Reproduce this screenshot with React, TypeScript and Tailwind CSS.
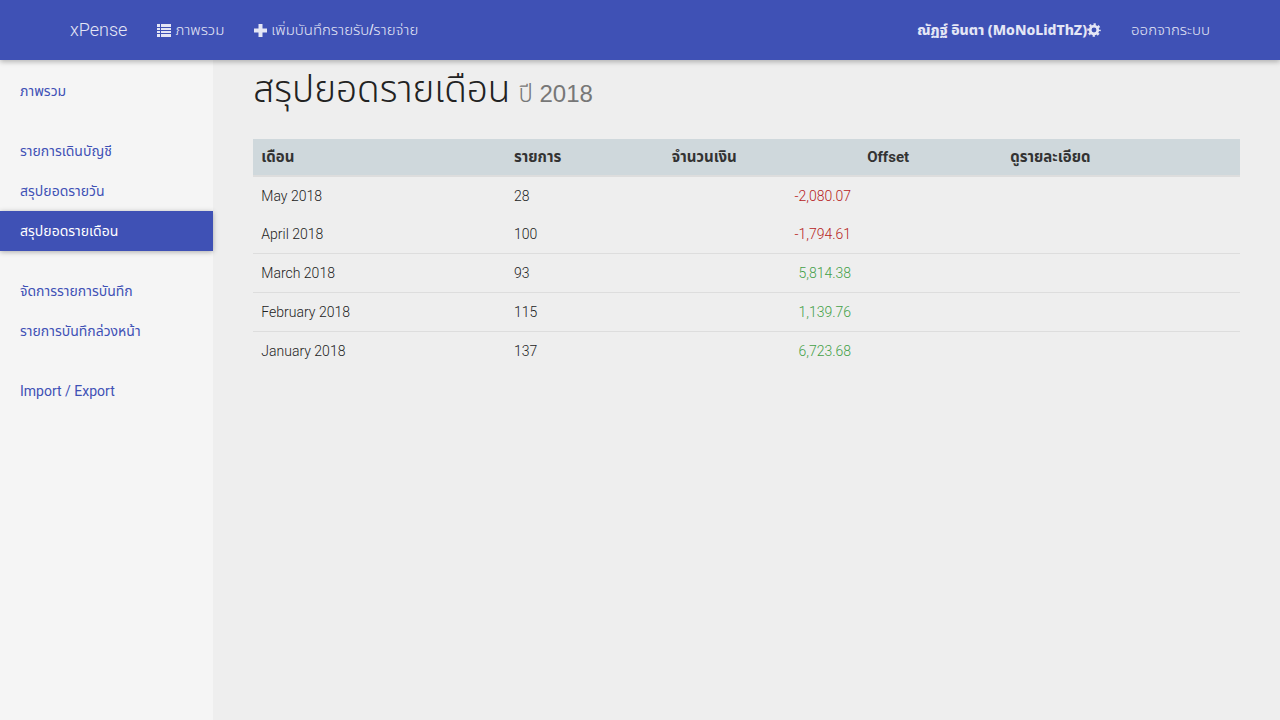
import type { ReactNode } from "react";

type MonthRow = { month: string; count: number; amount: string };

const rows: MonthRow[] = [
  { month: "May 2018", count: 28, amount: "-2,080.07" },
  { month: "April 2018", count: 100, amount: "-1,794.61" },
  { month: "March 2018", count: 93, amount: "5,814.38" },
  { month: "February 2018", count: 115, amount: "1,139.76" },
  { month: "January 2018", count: 137, amount: "6,723.68" },
];

const menuGroups: string[][] = [
  ["ภาพรวม"],
  ["รายการเดินบัญชี", "สรุปยอดรายวัน", "สรุปยอดรายเดือน"],
  ["จัดการรายการบันทึก", "รายการบันทึกล่วงหน้า"],
  ["Import / Export"],
];

const activeItem = "สรุปยอดรายเดือน";

function ListIcon() {
  return (
    <svg viewBox="0 0 14 13" className="h-[13px] w-[14px] shrink-0" fill="currentColor" aria-hidden="true">
      <path d="M0 0h3v3H0zM4 0h10v3H4zM0 4h3v2H0zM4 4h10v2H4zM0 7h3v2H0zM4 7h10v2H4zM0 10h3v3H0zM4 10h10v3H4z" />
    </svg>
  );
}

function PlusIcon() {
  return (
    <svg viewBox="0 0 13 13" className="h-[13px] w-[13px] shrink-0" fill="currentColor" aria-hidden="true">
      <path d="M4.5 0h4v4.5H13v4H8.500V13h-4V8.500H0v-4h4.500z" />
    </svg>
  );
}

function CogIcon() {
  return (
    <svg viewBox="0 0 14 14" className="h-[14px] w-[14px] shrink-0" aria-hidden="true">
      <circle cx="7" cy="7" r="5.500" fill="none" stroke="currentColor" strokeWidth="2.600" strokeDasharray="2.160" strokeDashoffset="1.080" />
      <circle cx="7" cy="7" r="3.800" fill="none" stroke="currentColor" strokeWidth="2.700" />
    </svg>
  );
}

function NavLink({ children }: { children: ReactNode }) {
  return (
    <a href="#" className="flex h-full items-center gap-1 px-[15px] font-['Liberation_Sans','Noto_Sans_Thai',sans-serif] text-[15px]">
      {children}
    </a>
  );
}

export default function App() {
  return (
    <div className="flex min-h-screen flex-col bg-[#eeeeee] font-['Roboto','Noto_Sans_Thai',sans-serif] text-sm font-light text-[#222222]">
      <header className="relative flex h-[60px] items-center justify-between bg-[#3f51b5] px-[55px] text-[#e4e6f5] shadow-[0_2px_5px_rgba(0,0,0,0.26)]">
        <nav className="flex h-full items-center">
          <a href="#" className="flex h-full items-center px-[15px] text-lg">
            xPense
          </a>
          <NavLink>
            <ListIcon />
            ภาพรวม
          </NavLink>
          <NavLink>
            <PlusIcon />
            เพิ่มบันทึกรายรับ/รายจ่าย
          </NavLink>
        </nav>
        <nav className="flex h-full items-center">
          <a href="#" className="flex h-full items-center px-[15px] font-['Noto_Sans','Noto_Sans_Thai',sans-serif] text-sm font-extrabold">
            ณัฏฐ์ อินตา (MoNoLidThZ)
            <CogIcon />
          </a>
          <NavLink>ออกจากระบบ</NavLink>
        </nav>
      </header>

      <div className="flex grow">
        <aside className="flex w-1/6 shrink-0 flex-col gap-5 bg-[#f5f5f5] pt-[11px]">
          {menuGroups.map((group) => (
            <ul key={group[0]}>
              {group.map((item) => (
                <li key={item}>
                  <a
                    href="#"
                    className={
                      item === activeItem
                        ? "flex h-10 items-center bg-[#3f51b5] px-5 text-sm font-normal text-white shadow-[0_1px_5px_rgba(0,0,0,0.3)]"
                        : "flex h-10 items-center px-5 text-sm font-normal text-[#3f51b5]"
                    }
                  >
                    {item}
                  </a>
                </li>
              ))}
            </ul>
          ))}
        </aside>

        <main className="grow px-10 pt-2">
          <h1 className="flex h-[71px] items-baseline gap-2 text-[37px] leading-[44px]">
            สรุปยอดรายเดือน
            <small className="font-['Liberation_Sans','Noto_Sans_Thai',sans-serif] text-2xl leading-[44px] text-[#777777]">ปี 2018</small>
          </h1>
          <table className="w-full table-fixed border-collapse text-left">
            <colgroup>
              <col className="w-[25.600%]" />
              <col className="w-[16%]" />
              <col className="w-[19.800%]" />
              <col className="w-[14.500%]" />
              <col />
            </colgroup>
            <thead>
              <tr className="h-[37px] border-b-2 border-[#dddddd] bg-[#cfd8dc] text-[15px] leading-5 text-[#333333]">
                <th className="px-2 font-bold">เดือน</th>
                <th className="px-2 font-bold">รายการ</th>
                <th className="px-2 font-bold">จำนวนเงิน</th>
                <th className="px-2 font-bold">Offset</th>
                <th className="px-2 font-bold">ดูรายละเอียด</th>
              </tr>
            </thead>
            <tbody className="leading-[22px]">
              {rows.map((row, index) => (
                <tr key={row.month} className={index > 1 ? "border-t border-[#dddddd]" : ""}>
                  <td className="p-2">{row.month}</td>
                  <td className="p-2">{row.count}</td>
                  <td className={row.amount.startsWith("-") ? "p-2 text-right text-[#b71c1c]" : "p-2 text-right text-[#43a047]"}>
                    {row.amount}
                  </td>
                  <td className="p-2" />
                  <td className="p-2" />
                </tr>
              ))}
            </tbody>
          </table>
        </main>
      </div>
    </div>
  );
}
